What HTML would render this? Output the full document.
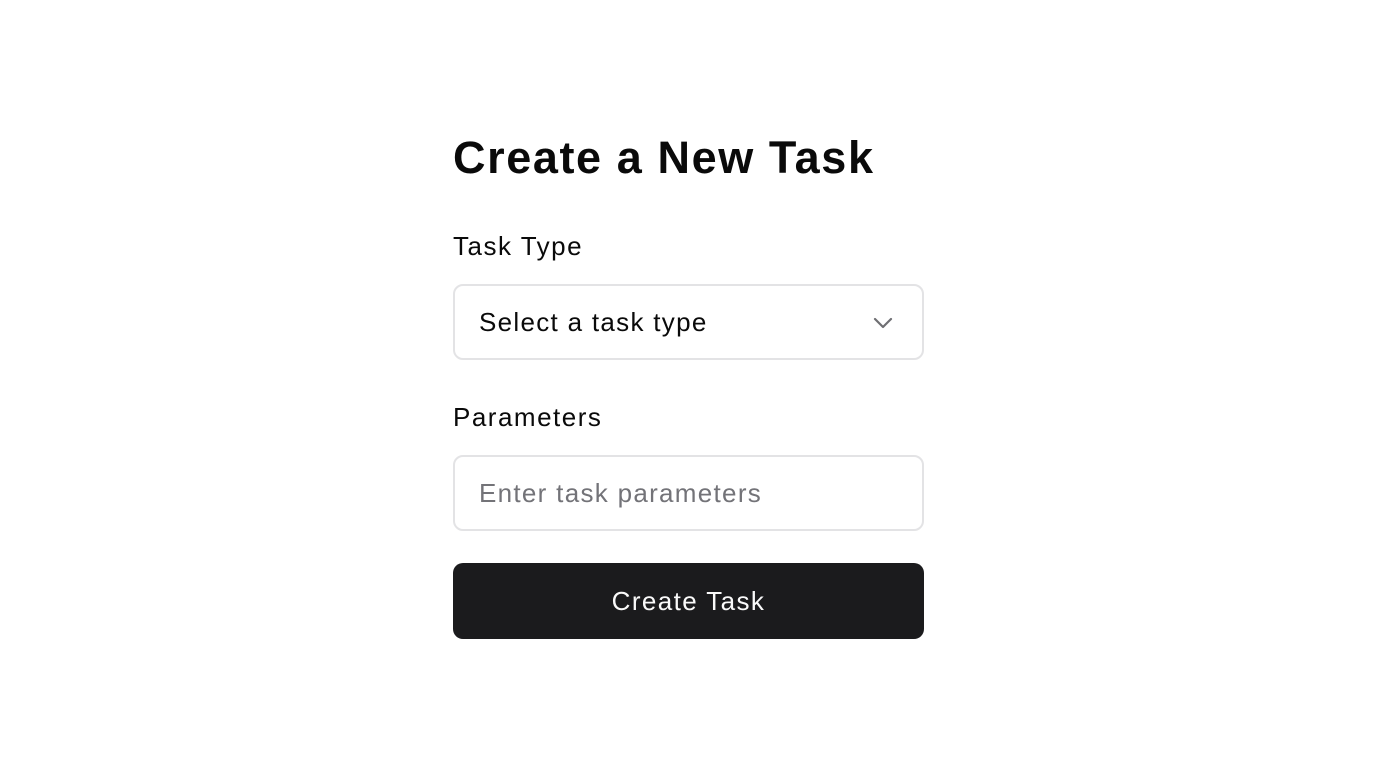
<!DOCTYPE html>
<html><head><meta charset="utf-8"><style>
html,body{margin:0;padding:0;background:#fff;width:1376px;height:768px;overflow:hidden;font-family:"Liberation Sans",Arial,sans-serif;color:#0a0a0a}
.wrap{position:absolute;left:453px;top:0;width:471px}
h1{position:absolute;top:132px;left:0;margin:0;font-size:45px;font-weight:bold;white-space:nowrap;letter-spacing:1.6px}
.lbl{position:absolute;left:0;font-size:26px;white-space:nowrap;letter-spacing:1.5px}
.box{position:absolute;left:0;width:467px;height:72px;border:2px solid #e3e3e5;border-radius:10px;box-sizing:content-box}
.box span{position:absolute;left:24px;top:21px;font-size:26px;white-space:nowrap;letter-spacing:1.3px}
.btn{position:absolute;left:0;top:563px;width:471px;height:76px;background:#1b1b1d;border-radius:10px;color:#fafafa;font-size:26px;text-align:center;line-height:76px;letter-spacing:1.4px}
</style></head><body>
<div class="wrap">
<h1>Create a New Task</h1>
<div class="lbl" style="top:231px">Task Type</div>
<div class="box" style="top:284px"><span>Select a task type</span>
<svg style="position:absolute;left:417px;top:29px" width="22" height="16" viewBox="0 0 22 16"><path d="M3 4 L11 12 L19 4" fill="none" stroke="#6f6f73" stroke-width="2.2" stroke-linecap="round" stroke-linejoin="round"/></svg></div>
<div class="lbl" style="top:402px">Parameters</div>
<div class="box" style="top:455px"><span style="color:#737378">Enter task parameters</span></div>
<div class="btn">Create Task</div>
</div>
</body></html>
